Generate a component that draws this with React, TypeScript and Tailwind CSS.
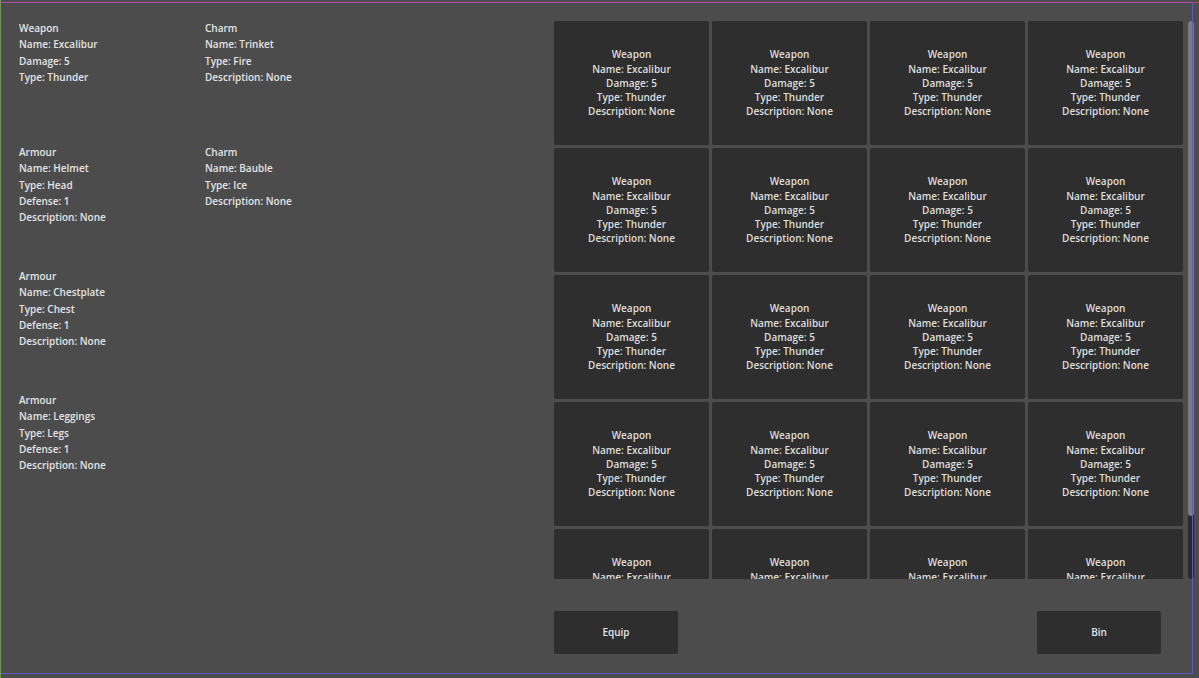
import React from "react";

const leftItems: (string[] | null)[][] = [
  [
    ["Weapon", "Name: Excalibur", "Damage: 5", "Type: Thunder"],
    ["Charm", "Name: Trinket", "Type: Fire", "Description: None"],
  ],
  [
    ["Armour", "Name: Helmet", "Type: Head", "Defense: 1", "Description: None"],
    ["Charm", "Name: Bauble", "Type: Ice", "Description: None"],
  ],
  [["Armour", "Name: Chestplate", "Type: Chest", "Defense: 1", "Description: None"], null],
  [["Armour", "Name: Leggings", "Type: Legs", "Defense: 1", "Description: None"], null],
];

const cardLines = ["Weapon", "Name: Excalibur", "Damage: 5", "Type: Thunder", "Description: None"];

export default function App() {
  return (
    <div
      className="relative w-[1199px] h-[678px] overflow-hidden bg-[#4c4c4c] text-[10px] font-semibold text-[#e4e4e4] flex"
      style={{ fontFamily: "'Open Sans', 'Noto Sans', sans-serif" }}
    >
      {/* left equipped panel */}
      <div className="w-[554px] pl-[19px] pt-[20px] flex flex-col">
        {leftItems.map((row, ri) => (
          <div key={ri} className="h-[124px] flex">
            {row.map((item, ci) => (
              <div key={ci} className="w-[186px] flex flex-col leading-[16.3px]">
                {item && item.map((l, li) => <div key={li}>{l}</div>)}
              </div>
            ))}
          </div>
        ))}
      </div>

      {/* right inventory */}
      <div className="flex flex-col pt-[21px] w-[640px]">
        <div className="h-[558px] flex overflow-hidden">
          <div className="w-[629px] grid grid-cols-4 gap-[3px] auto-rows-[124px] content-start">
            {Array.from({ length: 20 }).map((_, i) => (
              <div
                key={i}
                className="bg-[#2e2e2e] rounded-[2px] flex flex-col items-center justify-center leading-[14.3px] text-[#dedede]"
              >
                {cardLines.map((l, li) => (
                  <div key={li}>{l}</div>
                ))}
              </div>
            ))}
          </div>
          <div className="ml-[5px] w-[6px] h-full rounded-[3px] bg-[#2a2a2a] flex flex-col">
            <div className="h-[495px] rounded-[3px] bg-[#7c7c7c]" />
          </div>
        </div>
        <div className="mt-[32px] w-[607px] flex justify-between">
          <div className="w-[124px] h-[43px] bg-[#2e2e2e] rounded-[2px] flex items-center justify-center">
            Equip
          </div>
          <div className="w-[124px] h-[43px] bg-[#2e2e2e] rounded-[2px] flex items-center justify-center">
            Bin
          </div>
        </div>
      </div>

      {/* debug outlines */}
      <div className="absolute left-0 top-0 w-[1px] h-[678px] bg-[#6f9a55]" />
      <div className="absolute left-[1px] top-[2px] w-[1191px] h-[1px] bg-[#b14bb5]" />
      <div className="absolute left-[1193px] top-[2px] w-[6px] h-[1px] bg-[#d8403a]" />
      <div className="absolute left-[1192px] top-[2px] w-[1px] h-[672px] bg-[#5b5bc0]" />
      <div className="absolute left-[1px] top-[673px] w-[1192px] h-[1px] bg-[#5b5bc0]" />
    </div>
  );
}
